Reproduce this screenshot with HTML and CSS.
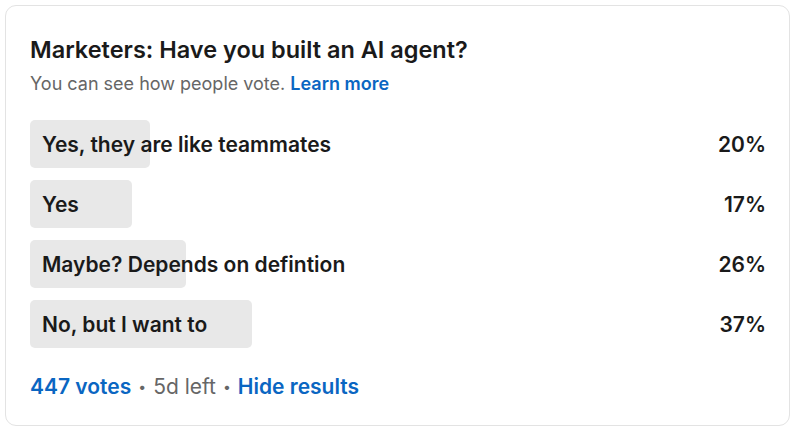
FILE: index.html
```html
<!DOCTYPE html>
<html>
<head>
<meta charset="utf-8">
<link rel="stylesheet" href="styles.css">
</head>
<body>
<div class="card">
  <h1 class="title">Marketers: Have you built an AI agent?</h1>
  <p class="sub">You can see how people vote. <a class="link">Learn more</a></p>
  <div class="options">
    <div class="row">
      <div class="track"><div class="fill" style="width:20%"></div><span class="label">Yes, they are like teammates</span></div>
      <span class="pct">20%</span>
    </div>
    <div class="row">
      <div class="track"><div class="fill" style="width:17%"></div><span class="label">Yes</span></div>
      <span class="pct">17%</span>
    </div>
    <div class="row">
      <div class="track"><div class="fill" style="width:26%"></div><span class="label">Maybe? Depends on defintion</span></div>
      <span class="pct">26%</span>
    </div>
    <div class="row">
      <div class="track"><div class="fill" style="width:37%"></div><span class="label">No, but I want to</span></div>
      <span class="pct">37%</span>
    </div>
  </div>
  <div class="footer">
    <a class="link">447 votes</a><span class="dot">•</span><span class="muted">5d left</span><span class="dot">•</span><a class="link">Hide results</a>
  </div>
</div>
</body>
</html>
```
FILE: styles.css
```css
* { box-sizing: border-box; }
html, body { margin: 0; padding: 0; background: #ffffff; }
body {
  font-family: Inter, "Noto Sans", sans-serif;
  color: #1a1a1a;
  padding: 5px 6px 6px 5px;
}
.card {
  width: 785px;
  height: 421px;
  border: 1px solid #e3e3e3;
  border-radius: 11px;
  background: #fff;
  padding: 28px 23px 0 24px;
}
.title {
  margin: 0;
  font-size: 23.5px;
  line-height: 32px;
  font-weight: 600;
  color: #1a1a1a;
}
.sub {
  margin: 6px 0 0 0;
  font-size: 18px;
  line-height: 24px;
  color: #666666;
}
.link {
  color: #0a66c2;
  font-weight: 600;
  text-decoration: none;
}
.options {
  margin-top: 24px;
  display: flex;
  flex-direction: column;
  gap: 12px;
}
.row {
  display: flex;
  align-items: center;
  height: 48px;
}
.track {
  position: relative;
  width: 600px;
  height: 48px;
  display: flex;
  align-items: center;
}
.fill {
  position: absolute;
  left: 0; top: 0; bottom: 0;
  background: #e8e8e8;
  border-radius: 5px;
}
.label {
  position: relative;
  padding-left: 12px;
  font-size: 21px;
  font-weight: 600;
  color: #1a1a1a;
}
.pct {
  flex: 1;
  text-align: right;
  font-size: 21px;
  font-weight: 600;
  color: #1a1a1a;
}
.footer {
  margin-top: 25px;
  font-size: 21px;
  line-height: 28px;
  display: flex;
  align-items: center;
}
.dot {
  color: #666;
  font-size: 14px;
  margin: 0 7px;
}
.muted { color: #666666; }
```
